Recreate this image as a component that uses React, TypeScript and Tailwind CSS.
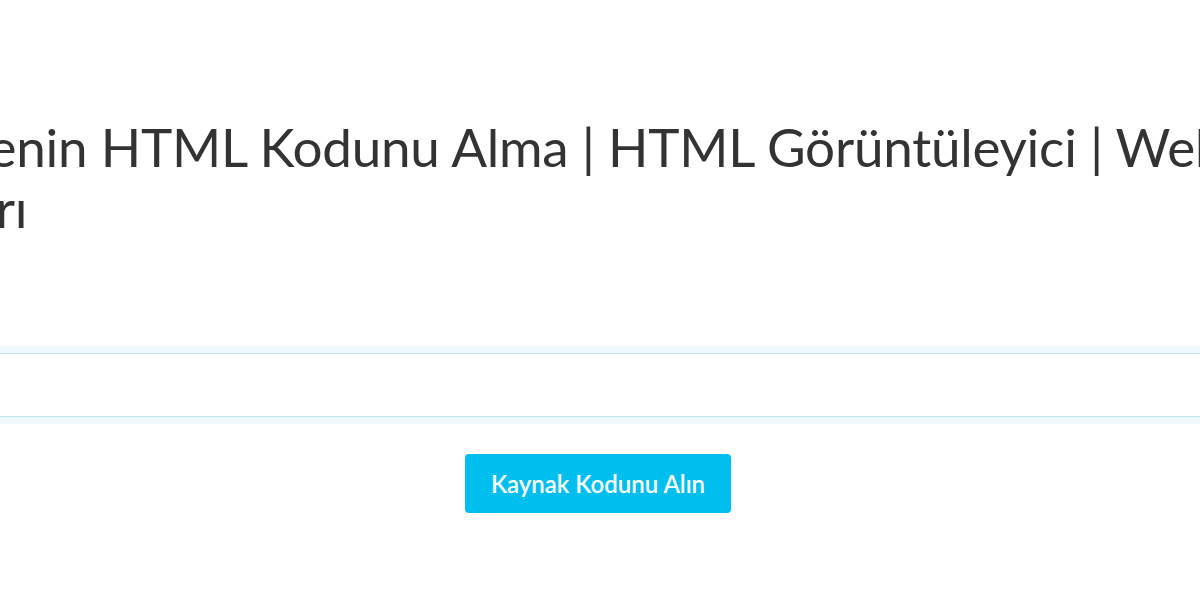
import React from "react";

export default function App() {
  return (
    <div className="w-full h-[600px] overflow-hidden bg-white" style={{ fontFamily: "Lato, 'Noto Sans', sans-serif" }}>
      <div className="ml-[-148px] mr-[-144px] pt-[116px]">
        <h1 className="text-[53px] leading-[61px] font-normal tracking-[-0.25px] text-[#333333] m-0 whitespace-nowrap">
          Bir Sitenin HTML Kodunu Alma | HTML Görüntüleyici | Web Geliştirici
          <br />
          Araçları
        </h1>
        <div className="mt-[115px]">
          <div className="h-[64px] border border-[#c3e5f3] bg-white shadow-[0_0_0_7px_#eff9fd]" />
        </div>
        <div className="flex justify-center mt-[37px]">
          <button className="h-[59px] w-[266px] rounded-[4px] bg-[#00bfee] text-white text-[24px] font-semibold">
            Kaynak Kodunu Alın
          </button>
        </div>
      </div>
    </div>
  );
}
